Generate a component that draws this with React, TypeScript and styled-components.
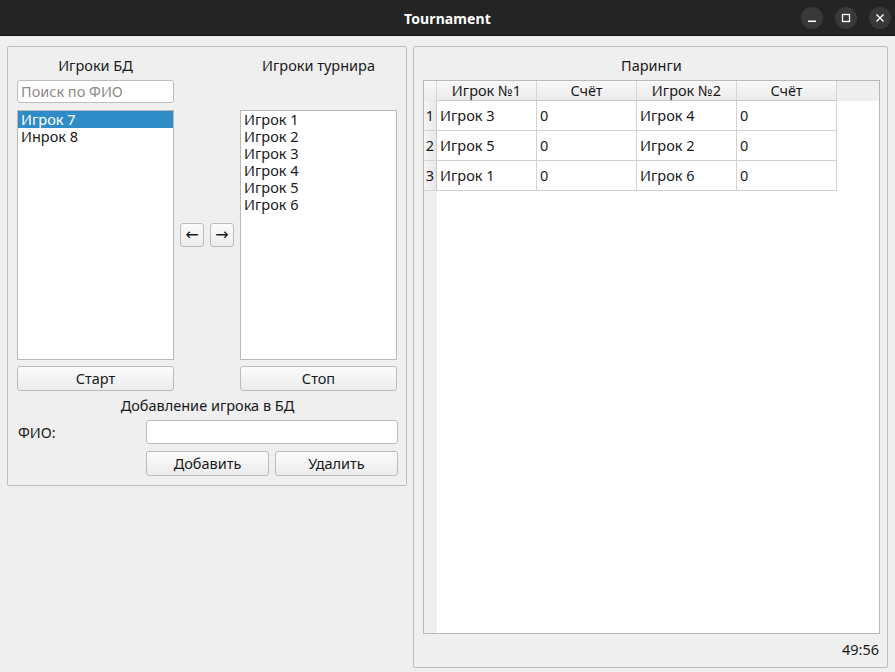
import React from "react";
import styled, { createGlobalStyle } from "styled-components";

const Global = createGlobalStyle`
  html, body { margin: 0; padding: 0; background: #efefef; }
  body { font-family: "Noto Sans", "Open Sans", sans-serif; font-size: 14.5px; color: #1a1a1a; }
  * { box-sizing: border-box; }
`;

const Window = styled.div`
  width: 895px;
  height: 672px;
  display: flex;
  flex-direction: column;
  background: #efefef;
  overflow: hidden;
`;

const TitleBar = styled.div`
  height: 36px;
  flex: none;
  background: #242424;
  border-bottom: 1px solid #151515;
  display: flex;
  align-items: center;
  justify-content: center;
  position: relative;
  padding-top: 1px;
`;

const Title = styled.div`
  color: #ffffff;
  font-weight: 700;
  font-size: 14px;
  letter-spacing: 0.1px;
`;

const Controls = styled.div`
  position: absolute;
  right: 4px;
  top: 7px;
  display: flex;
  gap: 12px;
`;

const CtlBtn = styled.div`
  width: 22px;
  height: 22px;
  border-radius: 50%;
  background: #393939;
  display: flex;
  align-items: center;
  justify-content: center;
`;

const Body = styled.div`
  flex: 1;
  display: flex;
  align-items: flex-start;
  gap: 6px;
  padding: 10px 7px 4px 7px;
`;

const Group = styled.div<{ $w: number; $h: number }>`
  width: ${(p) => p.$w}px;
  height: ${(p) => p.$h}px;
  border: 1px solid #bdbdbd;
  border-radius: 2px;
  display: flex;
  flex-direction: column;
`;

const LeftGroup = styled(Group)`
  padding: 9px 8px 9px 9px;
`;

const RightGroup = styled(Group)`
  padding: 9px 7px 7px 9px;
`;

const TopGrid = styled.div`
  display: grid;
  grid-template-columns: 157px 66px 157px;
  grid-template-rows: 24px 30px 256px 25px;
`;

const Caption = styled.div<{ $col?: number }>`
  grid-column: ${(p) => p.$col ?? 1};
  grid-row: 1;
  height: 20px;
  line-height: 18px;
  text-align: center;
`;

const SearchInput = styled.div`
  grid-column: 1;
  grid-row: 2;
  height: 23px;
  border: 1px solid #bdbdbd;
  border-radius: 3px;
  background: #fff;
  color: #8a8a8a;
  padding-left: 3px;
  line-height: 20px;
`;

const ListBox = styled.div<{ $col: number }>`
  grid-column: ${(p) => p.$col};
  grid-row: 3;
  height: 250px;
  border: 1px solid #b9b9b9;
  background: #fff;
`;

const ListItem = styled.div<{ $sel?: boolean }>`
  height: 17px;
  line-height: 17px;
  padding-left: 3px;
  background: ${(p) => (p.$sel ? "#308cc6" : "transparent")};
  color: ${(p) => (p.$sel ? "#ffffff" : "#1a1a1a")};
`;

const ArrowCol = styled.div`
  grid-column: 2;
  grid-row: 3;
  height: 250px;
  display: flex;
  align-items: center;
  justify-content: center;
  gap: 6px;
`;

const Button = styled.div`
  height: 25px;
  border: 1px solid #bcbcbc;
  border-radius: 3px;
  background: linear-gradient(#fbfbfb, #ececec);
  display: flex;
  align-items: center;
  justify-content: center;
  padding-bottom: 2px;
  color: #1a1a1a;
`;

const GridButton = styled(Button)<{ $col: number }>`
  grid-column: ${(p) => p.$col};
  grid-row: 4;
`;

const ArrowButton = styled(Button)`
  width: 24px;
  height: 24px;
  padding-bottom: 1px;
  font-size: 16px;
  font-family: "DejaVu Sans", sans-serif;
`;

const SectionTitle = styled.div`
  margin-top: 6px;
  height: 18px;
  line-height: 16px;
  text-align: center;
`;

const Form = styled.div`
  margin-top: 5px;
  display: grid;
  grid-template-columns: 129px 1fr;
  grid-template-rows: 24px 25px;
  row-gap: 7px;
`;

const FormLabel = styled.div`
  line-height: 24px;
  padding-left: 1px;
`;

const TextField = styled.div`
  border: 1px solid #bdbdbd;
  border-radius: 3px;
  background: #fff;
`;

const ButtonPair = styled.div`
  grid-column: 2;
  display: grid;
  grid-template-columns: 1fr 1fr;
  gap: 6px;
`;

const PanelTitle = styled.div`
  height: 20px;
  line-height: 18px;
  text-align: center;
  margin-bottom: 4px;
`;

const Table = styled.div`
  height: 554px;
  border: 1px solid #b9b9b9;
  background: #fff;
  display: grid;
  grid-template-columns: 13px repeat(4, 100px) 1fr;
  grid-template-rows: 20px repeat(3, 30px) 1fr;
`;

const Corner = styled.div`
  background: linear-gradient(#f8f8f8, #ebebeb);
  border-right: 1px solid #d6d6d6;
`;

const HeadCell = styled.div`
  background: linear-gradient(#f8f8f8, #ebebeb);
  border-right: 1px solid #d6d6d6;
  border-bottom: 1px solid #c9c9c9;
  text-align: center;
  line-height: 18px;
`;

const HeadFill = styled.div`
  background: #efefef;
`;

const RowHead = styled.div`
  background: linear-gradient(90deg, #f4f4f4, #e8e8e8);
  border-bottom: 1px solid #d6d6d6;
  border-right: 1px solid #c9c9c9;
  display: flex;
  align-items: center;
  justify-content: center;
  padding-bottom: 2px;
`;

const Cell = styled.div`
  border-right: 1px solid #d2d2d2;
  border-bottom: 1px solid #d2d2d2;
  display: flex;
  align-items: center;
  padding-left: 3px;
  padding-bottom: 2px;
`;

const WhiteFill = styled.div<{ $span?: string }>`
  background: #fff;
  grid-column: ${(p) => p.$span ?? "auto"};
`;

const StripFill = styled.div`
  background: #efefef;
`;

const Timer = styled.div`
  margin-top: 6px;
  height: 20px;
  line-height: 18px;
  text-align: right;
  padding-right: 1px;
`;

const pairs = [
  ["Игрок 3", "0", "Игрок 4", "0"],
  ["Игрок 5", "0", "Игрок 2", "0"],
  ["Игрок 1", "0", "Игрок 6", "0"],
];

export default function App() {
  return (
    <Window>
      <Global />
      <TitleBar>
        <Title>Tournament</Title>
        <Controls>
          <CtlBtn>
            <svg width="10" height="10" viewBox="0 0 10 10">
              <rect x="1" y="7.5" width="8" height="1.5" fill="#fff" />
            </svg>
          </CtlBtn>
          <CtlBtn>
            <svg width="10" height="10" viewBox="0 0 10 10">
              <rect x="1.5" y="1.5" width="7" height="7" fill="none" stroke="#fff" strokeWidth="1.3" />
            </svg>
          </CtlBtn>
          <CtlBtn>
            <svg width="10" height="10" viewBox="0 0 10 10">
              <path d="M1.5 1.5 L8.5 8.5 M8.5 1.5 L1.5 8.5" stroke="#fff" strokeWidth="1.4" />
            </svg>
          </CtlBtn>
        </Controls>
      </TitleBar>
      <Body>
        <LeftGroup $w={400} $h={440}>
          <TopGrid>
            <Caption $col={1}>Игроки БД</Caption>
            <Caption $col={3}>Игроки турнира</Caption>
            <SearchInput>Поиск по ФИО</SearchInput>
            <ListBox $col={1}>
              <ListItem $sel>Игрок 7</ListItem>
              <ListItem>Инрок 8</ListItem>
            </ListBox>
            <ArrowCol>
              <ArrowButton>←</ArrowButton>
              <ArrowButton>→</ArrowButton>
            </ArrowCol>
            <ListBox $col={3}>
              {[1, 2, 3, 4, 5, 6].map((n) => (
                <ListItem key={n}>Игрок {n}</ListItem>
              ))}
            </ListBox>
            <GridButton $col={1}>Старт</GridButton>
            <GridButton $col={3}>Стоп</GridButton>
          </TopGrid>
          <SectionTitle>Добавление игрока в БД</SectionTitle>
          <Form>
            <FormLabel>ФИО:</FormLabel>
            <TextField />
            <ButtonPair>
              <Button>Добавить</Button>
              <Button>Удалить</Button>
            </ButtonPair>
          </Form>
        </LeftGroup>
        <RightGroup $w={475} $h={622}>
          <PanelTitle>Паринги</PanelTitle>
          <Table>
            <Corner />
            <HeadCell>Игрок №1</HeadCell>
            <HeadCell>Счёт</HeadCell>
            <HeadCell>Игрок №2</HeadCell>
            <HeadCell>Счёт</HeadCell>
            <HeadFill />
            {pairs.map((r, i) => (
              <React.Fragment key={i}>
                <RowHead>{i + 1}</RowHead>
                {r.map((c, j) => (
                  <Cell key={j}>{c}</Cell>
                ))}
                <WhiteFill />
              </React.Fragment>
            ))}
            <StripFill />
            <WhiteFill $span="2 / 7" />
          </Table>
          <Timer>49:56</Timer>
        </RightGroup>
      </Body>
    </Window>
  );
}
